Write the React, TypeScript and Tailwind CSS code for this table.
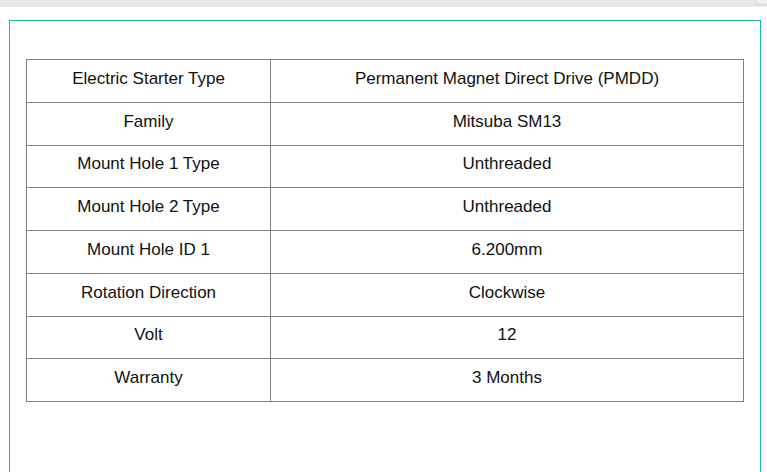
const rows: [string, string][] = [
  ["Electric Starter Type", "Permanent Magnet Direct Drive (PMDD)"],
  ["Family", "Mitsuba SM13"],
  ["Mount Hole 1 Type", "Unthreaded"],
  ["Mount Hole 2 Type", "Unthreaded"],
  ["Mount Hole ID 1", "6.200mm"],
  ["Rotation Direction", "Clockwise"],
  ["Volt", "12"],
  ["Warranty", "3 Months"],
]

export default function App() {
  return (
    <div className="h-[472px] w-[767px] overflow-hidden bg-white font-['Liberation_Sans',Arial,sans-serif]">
      {/* top strip */}
      <div className="flex h-[7px] justify-end bg-[#e9e9e9]">
        <div className="mr-[-4px] h-[5px] w-[16px] rounded-bl-[4px] border-b border-l border-[#d4d4d4] bg-[#efefef]" />
      </div>
      <div className="pl-[9px] pr-[6px] pt-[13px]">
        <div className="h-[500px] border border-[#1ab9a2] px-[16px] pt-[38px]">
          <table className="w-full table-fixed border-collapse text-[17px] text-[#111]">
            <colgroup>
              <col className="w-[244px]" />
              <col />
            </colgroup>
            <tbody>
              {rows.map(([k, v]) => (
                <tr key={k} className="h-[42.75px]">
                  <td className="border border-[#808080] p-0 pb-[4px] text-center align-middle leading-[18px]">{k}</td>
                  <td className="border border-[#808080] p-0 pb-[4px] text-center align-middle leading-[18px]">{v}</td>
                </tr>
              ))}
            </tbody>
          </table>
        </div>
      </div>
    </div>
  )
}
